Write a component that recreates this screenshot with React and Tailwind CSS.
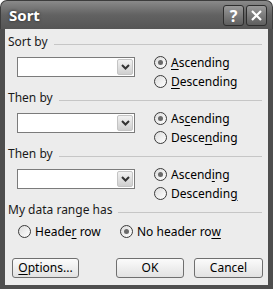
import React from 'react';

const font = { fontFamily: '"Noto Sans", "DejaVu Sans", sans-serif' };

const Ul = ({ text, at }) => {
  const i = text.indexOf(at);
  if (i < 0) return <span>{text}</span>;
  return (
    <span>
      {text.slice(0, i)}
      <span className="underline underline-offset-2">{text.slice(i, i + at.length)}</span>
      {text.slice(i + at.length)}
    </span>
  );
};

const Radio = ({ checked, label, at }) => (
  <div className="flex items-center h-[19px] gap-[4px]">
    <div className="w-[13px] h-[13px] rounded-full border border-[#3a3a3a] bg-gradient-to-br from-[#dcdcdc] to-[#ffffff] flex items-center justify-center">
      {checked && <div className="w-[5px] h-[5px] rounded-full bg-[#6a6a6a]" />}
    </div>
    <span className="text-[12px] leading-none text-black">
      <Ul text={label} at={at} />
    </span>
  </div>
);

const Header = ({ label }) => (
  <div className="flex items-center h-[14px] pr-[6px]">
    <span className="text-[12px] leading-none text-[#1a1a1a] whitespace-nowrap">{label}</span>
    <div className="flex-1 ml-[6px] mt-[4px] h-px bg-[#c6c6c6]" />
  </div>
);

const Select = () => (
  <div className="mt-[8px] ml-[9px] w-[118px] h-[20px] border border-[#7b7b7b] bg-white flex justify-end items-center pr-px">
    <div className="w-[16px] h-[16px] rounded-[2px] border border-[#c4c4c4] bg-gradient-to-b from-[#f2f2f2] to-[#cfcfcf] flex items-center justify-center">
      <svg width="9" height="6" viewBox="0 0 9 6">
        <path d="M1 1 L4.5 4.5 L8 1" fill="none" stroke="#333" strokeWidth="2" />
      </svg>
    </div>
  </div>
);

const Group = ({ label, a, d }) => (
  <div className="flex flex-col">
    <Header label={label} />
    <div className="flex items-start">
      <Select />
      <div className="flex flex-col pt-[4px] ml-[19px]">
        <Radio checked label="Ascending" at={a} />
        <Radio label="Descending" at={d} />
      </div>
    </div>
  </div>
);

const Btn = ({ children, w }) => (
  <div
    className={`${w} h-[20px] rounded-[3px] border border-[#6f6f6f] bg-gradient-to-b from-[#fbfbfb] to-[#e2e2e2] flex items-center justify-center text-[12px] leading-none text-black`}
  >
    {children}
  </div>
);

export default function App() {
  return (
    <div className="w-[273px] h-[289px] bg-white flex flex-col" style={font}>
      <div className="h-[29px] rounded-t-[7px] bg-gradient-to-b from-[#8a8a8a] via-[#626262] to-[#555555] flex items-center justify-between pl-[8px] pr-[5px] border-t border-x border-[#3c3c3c]">
        <span className="text-[15px] font-bold text-white [text-shadow:0_0_3px_#222]">Sort</span>
        <div className="flex gap-[2px] mt-[1px]">
          <div className="w-[21px] h-[21px] rounded-[3px] border border-[#2e2e2e] bg-gradient-to-b from-[#9a9a9a] to-[#5e5e5e] flex items-center justify-center text-white font-bold text-[16px] leading-none">
            ?
          </div>
          <div className="w-[21px] h-[21px] rounded-[3px] border border-[#2e2e2e] bg-gradient-to-b from-[#9a9a9a] to-[#5e5e5e] flex items-center justify-center">
            <svg width="13" height="13" viewBox="0 0 13 13">
              <path d="M2 2 L11 11 M11 2 L2 11" stroke="#fff" strokeWidth="2.2" />
            </svg>
          </div>
        </div>
      </div>
      <div className="flex-1 flex bg-[#4e4e4e] px-[5px] pb-[4px]">
        <div className="flex-1 bg-[#ececec] flex flex-col pt-[6px] pl-[3px]">
          <Group label="Sort by" a="A" d="D" />
          <Group label="Then by" a="c" d="n" />
          <Group label="Then by" a="i" d="g" />
          <Header label="My data range has" />
          <div className="flex pt-[5px] ml-[10px]">
            <div className="w-[102px]">
              <Radio label="Header row" at="r" />
            </div>
            <Radio checked label="No header row" at="w" />
          </div>
          <div className="flex items-center mt-[17px] ml-[4px]">
            <Btn w="w-[67px]">
              <Ul text="Options..." at="O" />
            </Btn>
            <div className="ml-[37px]">
              <Btn w="w-[68px]">OK</Btn>
            </div>
            <div className="ml-[10px]">
              <Btn w="w-[69px]">Cancel</Btn>
            </div>
          </div>
        </div>
      </div>
    </div>
  );
}
